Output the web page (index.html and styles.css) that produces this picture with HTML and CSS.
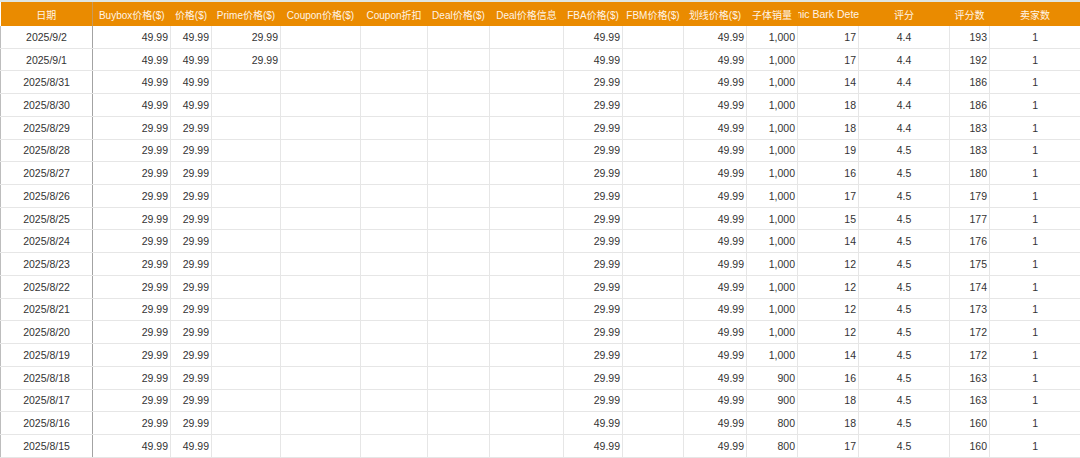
FILE: index.html
```html
<!DOCTYPE html>
<html lang="zh">
<head>
<meta charset="utf-8">
<title>数据表</title>
<link rel="stylesheet" href="styles.css">
</head>
<body>
<div class="sheet">
<table class="grid">
<colgroup>
<col class="w92"><col class="w78"><col class="w41"><col class="w69"><col class="w80"><col class="w67"><col class="w62"><col class="w74"><col class="w59"><col class="w61"><col class="w63"><col class="w51"><col class="w61"><col class="w91"><col class="w40"><col class="w91">
</colgroup>
<thead>
<tr>
<th class="first">日期</th><th>Buybox价格($)</th><th>价格($)</th><th>Prime价格($)</th><th>Coupon价格($)</th><th>Coupon折扣</th><th>Deal价格($)</th><th>Deal价格信息</th><th>FBA价格($)</th><th>FBM价格($)</th><th>划线价格($)</th><th>子体销量</th><th><div class="clip"><span>Organic Bark Detergent</span></div></th><th>评分</th><th>评分数</th><th>卖家数</th>
</tr>
</thead>
<tbody>
<tr><td class="first c">2025/9/2</td><td class="r">49.99</td><td class="r">49.99</td><td class="r">29.99</td><td></td><td></td><td></td><td></td><td class="r">49.99</td><td></td><td class="r">49.99</td><td class="r">1,000</td><td class="r">17</td><td class="c">4.4</td><td class="r">193</td><td class="c">1</td></tr>
<tr><td class="first c">2025/9/1</td><td class="r">49.99</td><td class="r">49.99</td><td class="r">29.99</td><td></td><td></td><td></td><td></td><td class="r">49.99</td><td></td><td class="r">49.99</td><td class="r">1,000</td><td class="r">17</td><td class="c">4.4</td><td class="r">192</td><td class="c">1</td></tr>
<tr><td class="first c">2025/8/31</td><td class="r">49.99</td><td class="r">49.99</td><td></td><td></td><td></td><td></td><td></td><td class="r">29.99</td><td></td><td class="r">49.99</td><td class="r">1,000</td><td class="r">14</td><td class="c">4.4</td><td class="r">186</td><td class="c">1</td></tr>
<tr><td class="first c">2025/8/30</td><td class="r">49.99</td><td class="r">49.99</td><td></td><td></td><td></td><td></td><td></td><td class="r">29.99</td><td></td><td class="r">49.99</td><td class="r">1,000</td><td class="r">18</td><td class="c">4.4</td><td class="r">186</td><td class="c">1</td></tr>
<tr><td class="first c">2025/8/29</td><td class="r">29.99</td><td class="r">29.99</td><td></td><td></td><td></td><td></td><td></td><td class="r">29.99</td><td></td><td class="r">49.99</td><td class="r">1,000</td><td class="r">18</td><td class="c">4.4</td><td class="r">183</td><td class="c">1</td></tr>
<tr><td class="first c">2025/8/28</td><td class="r">29.99</td><td class="r">29.99</td><td></td><td></td><td></td><td></td><td></td><td class="r">29.99</td><td></td><td class="r">49.99</td><td class="r">1,000</td><td class="r">19</td><td class="c">4.5</td><td class="r">183</td><td class="c">1</td></tr>
<tr><td class="first c">2025/8/27</td><td class="r">29.99</td><td class="r">29.99</td><td></td><td></td><td></td><td></td><td></td><td class="r">29.99</td><td></td><td class="r">49.99</td><td class="r">1,000</td><td class="r">16</td><td class="c">4.5</td><td class="r">180</td><td class="c">1</td></tr>
<tr><td class="first c">2025/8/26</td><td class="r">29.99</td><td class="r">29.99</td><td></td><td></td><td></td><td></td><td></td><td class="r">29.99</td><td></td><td class="r">49.99</td><td class="r">1,000</td><td class="r">17</td><td class="c">4.5</td><td class="r">179</td><td class="c">1</td></tr>
<tr><td class="first c">2025/8/25</td><td class="r">29.99</td><td class="r">29.99</td><td></td><td></td><td></td><td></td><td></td><td class="r">29.99</td><td></td><td class="r">49.99</td><td class="r">1,000</td><td class="r">15</td><td class="c">4.5</td><td class="r">177</td><td class="c">1</td></tr>
<tr><td class="first c">2025/8/24</td><td class="r">29.99</td><td class="r">29.99</td><td></td><td></td><td></td><td></td><td></td><td class="r">29.99</td><td></td><td class="r">49.99</td><td class="r">1,000</td><td class="r">14</td><td class="c">4.5</td><td class="r">176</td><td class="c">1</td></tr>
<tr><td class="first c">2025/8/23</td><td class="r">29.99</td><td class="r">29.99</td><td></td><td></td><td></td><td></td><td></td><td class="r">29.99</td><td></td><td class="r">49.99</td><td class="r">1,000</td><td class="r">12</td><td class="c">4.5</td><td class="r">175</td><td class="c">1</td></tr>
<tr><td class="first c">2025/8/22</td><td class="r">29.99</td><td class="r">29.99</td><td></td><td></td><td></td><td></td><td></td><td class="r">29.99</td><td></td><td class="r">49.99</td><td class="r">1,000</td><td class="r">12</td><td class="c">4.5</td><td class="r">174</td><td class="c">1</td></tr>
<tr><td class="first c">2025/8/21</td><td class="r">29.99</td><td class="r">29.99</td><td></td><td></td><td></td><td></td><td></td><td class="r">29.99</td><td></td><td class="r">49.99</td><td class="r">1,000</td><td class="r">12</td><td class="c">4.5</td><td class="r">173</td><td class="c">1</td></tr>
<tr><td class="first c">2025/8/20</td><td class="r">29.99</td><td class="r">29.99</td><td></td><td></td><td></td><td></td><td></td><td class="r">29.99</td><td></td><td class="r">49.99</td><td class="r">1,000</td><td class="r">12</td><td class="c">4.5</td><td class="r">172</td><td class="c">1</td></tr>
<tr><td class="first c">2025/8/19</td><td class="r">29.99</td><td class="r">29.99</td><td></td><td></td><td></td><td></td><td></td><td class="r">29.99</td><td></td><td class="r">49.99</td><td class="r">1,000</td><td class="r">14</td><td class="c">4.5</td><td class="r">172</td><td class="c">1</td></tr>
<tr><td class="first c">2025/8/18</td><td class="r">29.99</td><td class="r">29.99</td><td></td><td></td><td></td><td></td><td></td><td class="r">29.99</td><td></td><td class="r">49.99</td><td class="r">900</td><td class="r">16</td><td class="c">4.5</td><td class="r">163</td><td class="c">1</td></tr>
<tr><td class="first c">2025/8/17</td><td class="r">29.99</td><td class="r">29.99</td><td></td><td></td><td></td><td></td><td></td><td class="r">29.99</td><td></td><td class="r">49.99</td><td class="r">900</td><td class="r">18</td><td class="c">4.5</td><td class="r">163</td><td class="c">1</td></tr>
<tr><td class="first c">2025/8/16</td><td class="r">29.99</td><td class="r">29.99</td><td></td><td></td><td></td><td></td><td></td><td class="r">49.99</td><td></td><td class="r">49.99</td><td class="r">800</td><td class="r">18</td><td class="c">4.5</td><td class="r">160</td><td class="c">1</td></tr>
<tr><td class="first c">2025/8/15</td><td class="r">49.99</td><td class="r">49.99</td><td></td><td></td><td></td><td></td><td></td><td class="r">49.99</td><td></td><td class="r">49.99</td><td class="r">800</td><td class="r">17</td><td class="c">4.5</td><td class="r">160</td><td class="c">1</td></tr>
</tbody>
</table>
</div>
</body>
</html>
```

FILE: styles.css
```css
html, body {
  margin: 0;
  padding: 0;
  background: #ffffff;
}

.sheet {
  width: 1080px;
  height: 458px;
  overflow: hidden;
  border-top: 2px solid #dfe6e1;
  box-sizing: border-box;
}

.grid {
  width: 1080px;
  table-layout: fixed;
  border-collapse: collapse;
  font-family: "Liberation Sans", "Noto Sans CJK SC", sans-serif;
}

.w92 { width: 92px; }
.w78 { width: 78px; }
.w41 { width: 41px; }
.w69 { width: 69px; }
.w80 { width: 80px; }
.w67 { width: 67px; }
.w62 { width: 62px; }
.w74 { width: 74px; }
.w59 { width: 59px; }
.w61 { width: 61px; }
.w63 { width: 63px; }
.w51 { width: 51px; }
.w40 { width: 40px; }
.w91 { width: 91px; }

.grid th {
  height: 24px;
  padding: 0;
  background: #ea8b00;
  color: #fff4e6;
  font-size: 10px;
  font-weight: normal;
  text-align: center;
  white-space: nowrap;
  overflow: hidden;
}

.grid th.first {
  border-right: 1px solid #c99a5a;
}

.clip {
  display: flex;
  justify-content: center;
  overflow: hidden;
  white-space: nowrap;
}

.clip span {
  flex: none;
  font-size: 10.5px;
}

.grid td {
  height: 21.72px;
  padding: 0 2px;
  font-size: 10.5px;
  color: #333333;
  border-left: 1px solid #e6e6e6;
  border-bottom: 1px solid #e6e6e6;
  white-space: nowrap;
  overflow: hidden;
}

.grid td.first {
  border-left: 1px solid #bdbdbd;
  border-right: 1px solid #a3a3a3;
}

.grid td + td {
  border-left-color: #e6e6e6;
}

.c { text-align: center; }
.r { text-align: right; }
```
